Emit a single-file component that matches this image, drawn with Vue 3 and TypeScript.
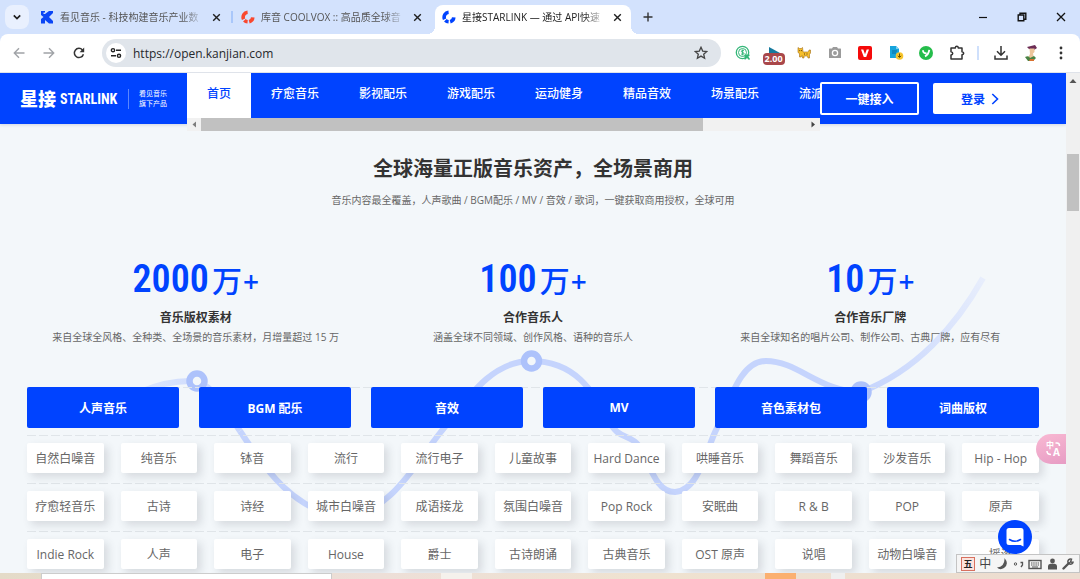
<script setup lang="ts">
interface Stat { num: string; title: string; desc: string }

const tabs = [
  { title: '看见音乐 - 科技构建音乐产业数', icon: 'k', active: false },
  { title: '库音 COOLVOX :: 高品质全球音', icon: 'c', active: false },
  { title: '星接STARLINK — 通过 API快速', icon: 's', active: true },
]
const menu = ['首页', '疗愈音乐', '影视配乐', '游戏配乐', '运动健身', '精品音效', '场景配乐', '流派']
const stats: Stat[] = [
  { num: '2000', title: '音乐版权素材', desc: '来自全球全风格、全种类、全场景的音乐素材，月增量超过 15 万' },
  { num: '100', title: '合作音乐人', desc: '涵盖全球不同领域、创作风格、语种的音乐人' },
  { num: '10', title: '合作音乐厂牌', desc: '来自全球知名的唱片公司、制作公司、古典厂牌，应有尽有' },
]
const categories = ['人声音乐', 'BGM 配乐', '音效', 'MV', '音色素材包', '词曲版权']
const tagRows = [
  ['自然白噪音', '纯音乐', '钵音', '流行', '流行电子', '儿童故事', 'Hard Dance', '哄睡音乐', '舞蹈音乐', '沙发音乐', 'Hip - Hop'],
  ['疗愈轻音乐', '古诗', '诗经', '城市白噪音', '成语接龙', '氛围白噪音', 'Pop Rock', '安眠曲', 'R & B', 'POP', '原声'],
  ['Indie Rock', '人声', '电子', 'House', '爵士', '古诗朗诵', '古典音乐', 'OST 原声', '说唱', '动物白噪音', '摇滚'],
]
</script>

<template>
  <div class="window">
    <header class="tabstrip">
      <button class="tab-search" aria-label="搜索标签页">
        <svg width="10" height="10" viewBox="0 0 10 10"><path d="M1.8 3.3 5 6.5 8.2 3.3" fill="none" stroke="#1f1f1f" stroke-width="1.7" /></svg>
      </button>
      <div class="tabs">
        <div v-for="t in tabs" :key="t.icon" class="tab" :class="{ active: t.active }">
          <svg v-if="t.icon === 'k'" class="favicon" viewBox="0 0 14 14">
            <path d="M1 1h4v1.500H3.500V4H5L9 1h4v2L9 7l4 4v2.500H9L5 10v3.500H1V9l2.500-2L1 5z" fill="#0a45f5" />
          </svg>
          <svg v-else class="favicon" viewBox="0 0 14 14">
            <g fill="none" :stroke="t.icon === 'c' ? '#f9482f' : '#0043ff'" stroke-width="3.6">
              <path d="M6.6 2.3A4.9 4.9 0 0 0 2.6 9.2" />
              <path d="M3.4 10.2A4.9 4.9 0 0 0 6.6 11.8" />
              <path d="M8.2 11.7A4.9 4.9 0 0 0 11.8 7.4" />
            </g>
          </svg>
          <span class="tab-title">{{ t.title }}</span>
          <button class="tab-close" aria-label="关闭">
            <svg width="9" height="9" viewBox="0 0 9 9"><path d="M1.200 1.200l6.600 6.600M7.800 1.200 1.200 7.800" stroke="#1f1f1f" stroke-width="1.4" /></svg>
          </button>
        </div>
      </div>
      <button class="new-tab" aria-label="新标签页">
        <svg width="10" height="10" viewBox="0 0 10 10"><path d="M5 .5v9M.5 5h9" stroke="#333" stroke-width="1.4" /></svg>
      </button>
      <div class="win-controls">
        <button aria-label="最小化"><svg width="10" height="10" viewBox="0 0 10 10"><path d="M1 5.5h8" stroke="#111" stroke-width="1.2" /></svg></button>
        <button aria-label="还原"><svg width="10" height="10" viewBox="0 0 10 10"><path d="M1.2 3h5.6v5.8H1.2zM3 3V1.2h5.8v6H7" fill="none" stroke="#111" stroke-width="1.4" /></svg></button>
        <button aria-label="关闭窗口"><svg width="10" height="10" viewBox="0 0 10 10"><path d="M1 1l8 8M9 1 1 9" stroke="#111" stroke-width="1.3" /></svg></button>
      </div>
    </header>

    <div class="toolbar">
      <button aria-label="后退"><svg width="12" height="12" viewBox="0 0 12 12"><path d="M11.5 6H1.5M6 1.2 1.3 6 6 10.8" fill="none" stroke="#a0a3a7" stroke-width="1.4" /></svg></button>
      <button aria-label="前进"><svg width="12" height="12" viewBox="0 0 12 12"><path d="M.5 6h10M6 1.2 10.7 6 6 10.8" fill="none" stroke="#a0a3a7" stroke-width="1.4" /></svg></button>
      <button aria-label="重新加载">
        <svg width="12" height="12" viewBox="0 0 12 12"><path d="M10.4 7.2A4.6 4.6 0 1 1 9.4 2.9L10.6 4.2" fill="none" stroke="#333" stroke-width="1.5" /><path d="M11.2.6v4.6H6.6z" fill="#333" /></svg>
      </button>
      <div class="omnibox">
        <button class="site-info" aria-label="网站信息">
          <svg width="12" height="12" viewBox="0 0 12 12"><g fill="none" stroke="#222" stroke-width="1.4"><circle cx="3" cy="3.2" r="1.6" /><path d="M6 3.2h5M1 8.8h5" /><circle cx="9" cy="8.8" r="1.6" /></g></svg>
        </button>
        <input class="url" type="text" aria-label="地址栏" value="https://open.kanjian.com" />
        <button class="star" aria-label="收藏">
          <svg width="14" height="14" viewBox="0 0 14 14"><path d="M7 1.3l1.7 3.8 4.1.4-3.1 2.7.9 4L7 10.1l-3.6 2.1.9-4L1.200 5.5l4.100-.4z" fill="none" stroke="#444" stroke-width="1.3" /></svg>
        </button>
      </div>
      <div class="extensions">
        <button aria-label="价格助手">
          <svg width="16" height="16" viewBox="0 0 16 16"><g fill="none" stroke="#35b779"><circle cx="7.5" cy="7.5" r="6.2" stroke-width="1.3" /><circle cx="7.5" cy="7.5" r="4" stroke-width="1" /><path d="M9 5.8C7.6 4.8 6 5.6 6.4 6.7c.4 1 2.400.5 2.600 1.700.1 1-1.700 1.400-2.900.5M7.600 4.600v5.800" stroke-width="1" /></g><path d="M9.500 9.500h5v1.500l-1.200.5 1.700 2.500-1 1-2-2-1.500 1.500h-1z" fill="#35b779" /></svg>
        </button>
        <button class="speed" aria-label="倍速">
          <svg width="16" height="16" viewBox="0 0 16 16"><path d="M3 0l11 6H3z" fill="#167a9e" /></svg>
          <span class="badge">2.00</span>
        </button>
        <button aria-label="猫">
          <svg width="16" height="16" viewBox="0 0 16 16"><path d="M2 2.500l1.300 1h2l1.200-1 .5 4.500h4.500q1.500 0 1.500-2h1.500v3l-1 1.500V13h-1.500L11.500 11H8v2H6.500L6 10.500 5 12H3.500V8.500L2 7.500z" fill="#f6bf2c" stroke="#a36d14" stroke-width=".6" /><path d="M3.300 5.600h.9M5 5.600h.9M8 9h1M10.500 9h1" stroke="#5b3b0c" /></svg>
        </button>
        <button aria-label="截图">
          <svg width="16" height="16" viewBox="0 0 16 16"><path d="M5 3.500 6 2h4l1 1.500h2.500q.5 0 .5.5v8.500q0 .5-.5.5h-11Q2 13 2 12.500V4q0-.5.5-.5z" fill="#9b9b9b" /><circle cx="8" cy="8" r="2.600" fill="none" stroke="#fff" stroke-width="1.300" /></svg>
        </button>
        <button aria-label="视频下载">
          <svg width="16" height="16" viewBox="0 0 16 16"><rect x="1" y="1" width="14" height="14" rx="2" fill="#f50a0a" /><path d="M4 4.500h2.300L8 9.300l1.700-4.800H12L9.200 12H6.800z" fill="#fff" /></svg>
        </button>
        <button aria-label="文档下载">
          <svg width="16" height="16" viewBox="0 0 16 16"><path d="M2 1h6l3 3v9H2z" fill="#16a4dc" /><path d="M8 1v3h3z" fill="#7fd0ef" /><path d="M4 6h5M4 8h4" stroke="#0b6f9f" /><circle cx="11.500" cy="11" r="3.800" fill="#f7c52d" /><path d="M11.500 8.500v3.500M9.800 10.800l1.700 1.700 1.700-1.700" fill="none" stroke="#6c5200" /></svg>
        </button>
        <button aria-label="翻译助手">
          <svg width="16" height="16" viewBox="0 0 16 16"><circle cx="8" cy="8" r="7" fill="#25bd4b" /><path d="M5 5.200Q5 8.500 8.500 8.200M11.300 4.800Q10.500 9.500 7 11.300" fill="none" stroke="#fff" stroke-width="1.900" /></svg>
        </button>
        <button aria-label="扩展程序">
          <svg width="16" height="16" viewBox="0 0 16 16"><path d="M2 3h4.200q.3-1.700 1.600-1.700T9.400 3H13v3.700q1.700.2 1.700 1.500T13 9.700V14H2v-4q1.700-.3 1.700-1.600T2 6.800z" fill="none" stroke="#333" stroke-width="1.500" stroke-linejoin="round" /></svg>
        </button>
      </div>
      <span class="divider"></span>
      <div class="tools">
        <button aria-label="下载内容"><svg width="14" height="14" viewBox="0 0 14 14"><path d="M7 0v9M3 5.300l4 4 4-4M1 9.500V13h12V9.500" fill="none" stroke="#333" stroke-width="1.500" /></svg></button>
        <button aria-label="个人资料">
          <svg width="16" height="18" viewBox="0 0 16 18"><path d="M4 3l8-2 2 3-3 2-5-1z" fill="#6c2c55" /><path d="M6.500 4.500h5V8L10 9.500l1 4.500H5l2-4z" fill="#edc59b" /><path d="M2 13q4-2 5 1l4-2 2 2-3 3H5z" fill="#498344" /><path d="M7 15h4v2H6z" fill="#d8702f" /></svg>
        </button>
        <button aria-label="菜单"><svg width="4" height="14" viewBox="0 0 4 14"><g fill="#333"><circle cx="2" cy="2" r="1.400" /><circle cx="2" cy="7" r="1.400" /><circle cx="2" cy="12" r="1.400" /></g></svg></button>
      </div>
    </div>

    <div class="viewport">
      <main class="page">
        <nav class="navbar">
          <a class="logo" href="#">
            <span class="logo-cn">星接</span><span class="logo-en">STARLINK</span>
            <span class="logo-sub">看见音乐<br />旗下产品</span>
          </a>
          <div class="menu-scroll">
            <div class="menu">
              <a v-for="(m, i) in menu" :key="m" href="#" :class="{ current: i === 0 }">{{ m }}</a>
            </div>
            <div class="hbar">
              <svg width="14" height="13" viewBox="0 0 14 13"><path d="M9 3.500v6L5.500 6.500z" fill="#7d7d7d" /></svg>
              <div class="htrack"><div class="hthumb"></div></div>
              <svg width="14" height="13" viewBox="0 0 14 13"><path d="M5.500 3.500v6L9 6.500z" fill="#444" /></svg>
            </div>
          </div>
          <div class="nav-actions">
            <button class="btn-outline">一键接入</button>
            <button class="btn-login">登录
              <svg width="8" height="12" viewBox="0 0 8 12"><path d="M1.300 1 6.500 6 1.300 11" fill="none" stroke="#0043ff" stroke-width="1.600" /></svg>
            </button>
          </div>
        </nav>

        <section class="assets">
          <svg class="curve" viewBox="0 0 1066 449">
            <defs>
              <linearGradient id="fade" gradientUnits="userSpaceOnUse" x1="860" y1="268" x2="990" y2="150">
                <stop offset="0" stop-color="#c5d4fd" /><stop offset="1" stop-color="#e9effc" />
              </linearGradient>
              <linearGradient id="lead" gradientUnits="userSpaceOnUse" x1="145" y1="0" x2="245" y2="0">
                <stop offset="0" stop-color="#dce6fc" /><stop offset="1" stop-color="#c5d4fd" />
              </linearGradient>
            </defs>
            <g fill="none" stroke-width="6">
              <path d="M140 268Q166 257 190 257C214 257 226 287 240 307" stroke="url(#lead)" />
              <path d="M240 307C264 344 296 390 345 392C389 390 414 342 440 309C466 277 490 237 531 237C577 237 594 270 608 295C618 317 630 309 639 322C651 343 656 368 675 368C699 367 706 325 717 304C732 270 742 237 766 237C798 237 820 268 861 268" stroke="#c5d4fd" />
              <path d="M861 268C916 247 956 202 983 154" stroke="url(#fade)" />
            </g>
            <g fill="#f3f7fa" stroke="#adc2fb" stroke-width="6.500">
              <circle cx="197" cy="257" r="7.500" /><circle cx="531.500" cy="237" r="7.500" /><circle cx="861" cy="268" r="7.500" />
            </g>
          </svg>
          <div class="inner">
            <h2>全球海量正版音乐资产，全场景商用</h2>
            <p class="sub">音乐内容最全覆盖，人声歌曲 / BGM配乐 / MV / 音效 / 歌词，一键获取商用授权，全球可用</p>
            <div class="stats">
              <div v-for="s in stats" :key="s.num" class="stat">
                <div class="figure"><span class="num">{{ s.num }}</span><span class="wan">万</span><span class="plus">+</span></div>
                <h3>{{ s.title }}</h3>
                <p>{{ s.desc }}</p>
              </div>
            </div>
            <div class="dashed categories">
              <button v-for="c in categories" :key="c">{{ c }}</button>
            </div>
            <div v-for="(row, r) in tagRows" :key="r" class="dashed tags">
              <span v-for="tag in row" :key="tag" class="tag">{{ tag }}</span>
            </div>
          </div>
        </section>

        <button class="translate" aria-label="翻译">
          <span class="zh">中</span><span class="en">A</span>
          <svg width="18" height="16" viewBox="0 0 18 16"><path d="M11.500 2h1.500q2.500 0 2.500 3M3 10q0 3.500 4 3.500" fill="none" stroke="#fff" stroke-width="1.500" /></svg>
        </button>
        <button class="chat" aria-label="在线客服">
          <svg width="18" height="20" viewBox="0 0 18 20"><path d="M3 1h12q2.500 0 2.500 2.500V19.500L14.500 18H3Q.500 18 .500 15.500v-12Q.500 1 3 1z" fill="#fff" /><path d="M3.500 12.500q5.500 3.500 11 0" fill="none" stroke="#0043ff" stroke-width="1.500" stroke-linecap="round" /></svg>
        </button>
      </main>
      <div class="vbar">
        <svg width="14" height="16" viewBox="0 0 14 16"><path d="M3.500 10h7L7 6z" fill="#555" /></svg>
        <div class="vthumb"></div>
      </div>
    </div>

    <footer class="desktop">
      <span class="task-input"></span><span class="pale"></span><span class="orange"></span><span class="grey"></span>
    </footer>

    <div class="ime">
      <span class="wu">五</span>
      <span class="zhong">中</span>
      <svg width="13" height="13" viewBox="0 0 13 13"><path d="M8.500 1Q13.500 7 8 11 4 13.500 1 10.500 9 9.500 8.500 1z" fill="#555" /></svg>
      <svg width="11" height="12" viewBox="0 0 11 12"><circle cx="2.500" cy="6" r="1.200" fill="none" stroke="#555" /><path d="M7.500 4.500h2V7L8 9" fill="none" stroke="#555" stroke-width="1.300" /></svg>
      <svg width="14" height="12" viewBox="0 0 14 12"><rect x="1" y="2.500" width="12" height="8" fill="none" stroke="#555" stroke-width="1.400" /><path d="M3 5h8M3 7h8" stroke="#555" stroke-width="1.200" stroke-dasharray="1.500 .7" /><path d="M4 9h6" stroke="#555" /></svg>
      <svg width="11" height="12" viewBox="0 0 11 12"><circle cx="5.500" cy="3" r="2.400" fill="#555" /><path d="M1 11.500V8q0-2 2.500-2.200h4Q10 6 10 8v3.500z" fill="#555" /></svg>
      <svg width="12" height="12" viewBox="0 0 12 12"><path d="M1.500 10.500 7 5" stroke="#555" stroke-width="2.400" stroke-linecap="round" /><path d="M9.500 1.200A2.600 2.600 0 1 0 11 4.200L8.500 4z" fill="none" stroke="#555" stroke-width="1.500" /></svg>
    </div>
  </div>
</template>

<style scoped>
.window {
  position: relative;
  display: flex;
  flex-direction: column;
  height: 100vh;
  overflow: hidden;
  background: #d3e2fd;
  font-family: "Open Sans", "Noto Sans CJK SC", sans-serif;
  font-size: 12px;
  color: #333;
}
button {
  display: flex;
  align-items: center;
  justify-content: center;
  padding: 0;
  border: 0;
  background: none;
  font: inherit;
  color: inherit;
}
a { color: inherit; text-decoration: none; }
h2, h3, p { margin: 0; }
svg { display: block; flex: none; }

.tabstrip { display: flex; flex: none; height: 34px; padding-left: 5px; }
.tab-search { width: 24px; height: 24px; margin-top: 5px; border-radius: 8px; background: #e9f0fe; }
.tabs { display: flex; padding-left: 4px; }
.tab {
  position: relative;
  display: flex;
  align-items: center;
  width: 201px;
  height: 29px;
  margin-top: 5px;
  padding: 0 11px 5px 7px;
  box-sizing: border-box;
  color: #555;
}
.favicon { width: 14px; height: 14px; }
.tab-title {
  flex: 1;
  margin-left: 6px;
  overflow: hidden;
  white-space: nowrap;
  font-size: 10px;
  line-height: 24px;
  mask-image: linear-gradient(90deg, #000 85%, transparent);
}
.tab-close { width: 14px; height: 14px; margin-left: 5px; }
.tab:first-child::after {
  content: "";
  position: absolute;
  right: 1px;
  top: 6px;
  width: 2px;
  height: 12px;
  background: #a9c7fa;
}
.tab.active { width: 196px; padding-right: 7px; background: #fff; border-radius: 8px 8px 0 0; color: #222; }
.tab.active::before, .tab.active::after {
  content: "";
  position: absolute;
  bottom: 0;
  width: 8px;
  height: 8px;
}
.tab.active::before { left: -8px; background: radial-gradient(circle at 0 0, transparent 8px, #fff 8px); }
.tab.active::after { right: -8px; background: radial-gradient(circle at 100% 0, transparent 8px, #fff 8px); }
.new-tab { width: 24px; height: 24px; margin: 5px 0 0 5px; }
.win-controls { display: flex; gap: 15px; margin-left: auto; padding-right: 7px; }
.win-controls button { width: 24px; height: 34px; }

.toolbar {
  display: flex;
  align-items: center;
  flex: none;
  height: 39px;
  padding-left: 4px;
  box-sizing: border-box;
  background: #fff;
  border-radius: 8px 8px 0 0;
  border-bottom: 1px solid #dfe3ea;
}
.toolbar > button { width: 30px; height: 28px; }
.omnibox {
  display: flex;
  align-items: center;
  flex: 1;
  height: 28px;
  margin-left: 8px;
  padding: 0 13px 0 4px;
  border-radius: 14px;
  background: #e0e5eb;
}
.site-info { width: 20px; height: 20px; border-radius: 50%; background: #fff; }
.url { flex: 1; min-width: 0; margin-left: 7px; padding: 0; border: 0; background: none; outline: 0; font: inherit; font-size: 12px; color: #26282b; }
.extensions { display: flex; justify-content: space-between; width: 244px; margin-left: 7px; }
.extensions button { position: relative; width: 30px; height: 28px; }
.speed svg { align-self: flex-start; margin-top: 8px; }
.badge {
  position: absolute;
  left: 4px;
  top: 14px;
  width: 22px;
  height: 12px;
  border-radius: 4px;
  background: #a9474a;
  color: #fff;
  font-size: 9px;
  font-weight: 700;
  line-height: 12px;
  text-align: center;
}
.divider { width: 2px; height: 14px; margin-left: 5px; background: #cfe0fc; }
.tools { display: flex; align-items: center; padding: 0 4px 0 7px; }
.tools button { width: 30px; height: 28px; }

.viewport { display: flex; flex: 1; min-height: 0; background: #f3f7fa; }
.page { position: relative; flex: 1; min-width: 0; overflow: hidden; }
.vbar { flex: none; width: 14px; background: #f0f0f0; }
.vthumb { width: 12px; height: 57px; margin: 65px auto 0; background: #c1c1c1; }

.navbar {
  position: relative;
  z-index: 2;
  display: flex;
  height: 51px;
  background: #0043ff;
  color: #fff;
  box-shadow: 0 1px 3px rgba(0, 30, 90, .15);
}
.logo { display: flex; align-items: center; flex: none; width: 167px; padding-left: 20px; white-space: nowrap; }
.logo-cn { font-size: 18px; font-weight: 900; line-height: 20px; }
.logo-en { width: 59px; margin-left: 4px; font-family: "Roboto Condensed", Roboto, sans-serif; font-size: 14px; font-weight: 700; line-height: 20px; }
.logo-sub { margin-left: 9px; padding-left: 10px; border-left: 1px solid #5a86ff; font-size: 7px; line-height: 10px; }
.menu-scroll { flex: 1; min-width: 0; }
.menu { display: flex; height: 45px; overflow: hidden; }
.menu a { flex: none; height: 45px; padding: 0 20px; line-height: 41px; font-weight: 500; white-space: nowrap; }
.menu a:last-child { padding-right: 0; }
.menu .current { background: #fff; color: #0043ff; }
.hbar { display: flex; height: 13px; background: #f1f1f1; }
.htrack { flex: 1; }
.hthumb { width: 83%; height: 100%; background: #c1c1c1; }
.nav-actions { display: flex; align-items: center; gap: 14px; flex: none; padding-right: 34px; }
.nav-actions button { box-sizing: border-box; width: 99px; height: 31px; border-radius: 2px; font-weight: 700; }
.nav-actions .btn-outline { height: 33px; border: 2px solid #fff; }
.nav-actions .btn-login { gap: 6px; padding-right: 5px; background: #fff; color: #0043ff; }

.assets { position: relative; }
.curve { position: absolute; left: 0; top: 0; width: 100%; }
.inner { position: relative; padding: 30px 27px 0; text-align: center; }
h2 { font-size: 20px; line-height: 30px; font-weight: 700; }
.sub { margin-top: 8px; font-size: 10px; line-height: 16px; color: #666; }
.stats { display: grid; grid-template-columns: repeat(3, 1fr); margin-top: 47px; }
.stat { height: 132px; }
.figure { display: flex; align-items: baseline; justify-content: center; height: 48px; line-height: 48px; color: #0043ff; }
.num { font-family: "Roboto Condensed", Roboto, sans-serif; font-size: 38px; font-weight: 600; }
.wan { margin-left: 3px; font-size: 30px; font-weight: 500; }
.plus { margin-left: 1px; font-size: 28px; font-weight: 600; }
.stat h3 { margin-top: 5px; font-size: 12px; line-height: 20px; }
.stat p { font-size: 10px; line-height: 19px; color: #666; white-space: nowrap; }
.dashed {
  background: repeating-linear-gradient(90deg, #e0e5e9 0 9px, transparent 9px 12px) top / 100% 1px no-repeat;
}
.categories { display: grid; grid-template-columns: repeat(6, 1fr); gap: 20px; height: 48px; }
.categories button { height: 41px; border-radius: 2px; background: #0043ff; color: #fff; font-weight: 700; }
.tags { display: grid; grid-template-columns: repeat(11, 1fr); gap: 17px; height: 40px; padding-top: 8px; }
.tag { height: 30px; border-radius: 2px; background: #fff; box-shadow: 4px 4px 8px rgba(60, 70, 80, .16); color: #666; line-height: 32px; white-space: nowrap; }

.translate {
  position: absolute;
  z-index: 3;
  right: 0;
  top: 361px;
  width: 30px;
  height: 30px;
  border-radius: 15px 0 0 15px;
  background: linear-gradient(160deg, #f9b9d3, #e79cc4);
  color: #fff;
  font-weight: 700;
}
.translate svg { position: absolute; left: 8px; top: 7px; }
.zh { position: absolute; left: 10px; top: 6px; font-size: 8px; line-height: 9px; }
.en { position: absolute; left: 17px; top: 12px; font-size: 10px; line-height: 12px; }
.chat {
  position: absolute;
  z-index: 3;
  right: 34px;
  bottom: 19px;
  width: 34px;
  height: 34px;
  border-radius: 50%;
  background: #0043ff;
}
.desktop {
  display: flex;
  flex: none;
  height: 6px;
  padding-left: 41px;
  background: linear-gradient(90deg, #e4dbc8, #eddfd8 35%, #efe2d0 60%, #ecdcd0);
}
.task-input { width: 28%; background: #fff; border: 1px solid #ccc; border-bottom: 0; box-sizing: border-box; }
.pale { width: 3%; margin-left: 109px; background: #f5f1ec; }
.orange { width: 3%; margin-left: 293px; background: #fbb070; }
.grey { width: 14px; margin-left: 35px; background: #efefef; }
.ime {
  position: absolute;
  z-index: 5;
  right: 0;
  bottom: 6px;
  display: flex;
  align-items: center;
  justify-content: space-between;
  width: 124px;
  height: 19px;
  box-sizing: border-box;
  padding: 0 5px 0 4px;
  border: 1px solid #c4c4c4;
  background: #f5f5f5;
  color: #444;
}
.wu { width: 12px; height: 12px; border: 1px solid #d8705f; background: #fbe3dd; font-size: 9px; font-weight: 700; line-height: 12px; text-align: center; color: #222; }
.zhong { font-size: 12px; line-height: 17px; }
</style>
